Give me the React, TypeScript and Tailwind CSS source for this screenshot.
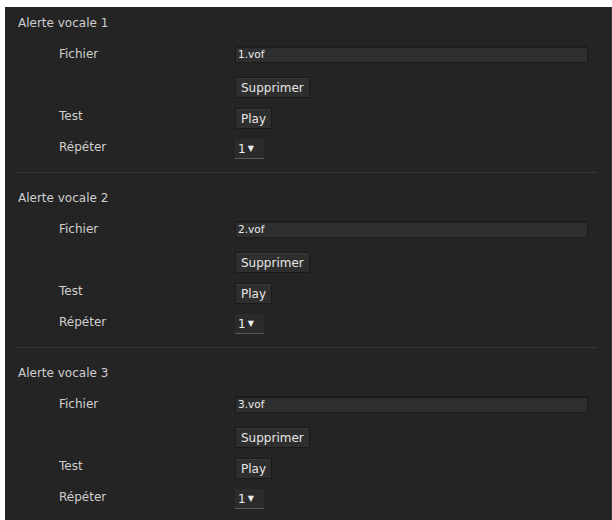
import React from 'react';

interface VoiceAlert {
  id: number;
  file: string;
  repeat: number;
}

const alerts: VoiceAlert[] = [
  { id: 1, file: '1.vof', repeat: 1 },
  { id: 2, file: '2.vof', repeat: 1 },
  { id: 3, file: '3.vof', repeat: 1 },
];

const font = { fontFamily: '"DejaVu Sans", Verdana, sans-serif' };

function SmallButton({ label }: { label: string }) {
  return (
    <button
      type="button"
      className="h-[21px] px-[5px] bg-[#2e2e2e] border border-[#1a1a1a] shadow-[inset_0_1px_0_#3a3a3a] text-[12px] leading-[14px] text-[#e6e6e6]"
    >
      {label}
    </button>
  );
}

function AlertSection({ alert, first }: { alert: VoiceAlert; first: boolean }) {
  return (
    <section className={first ? 'pt-[9px]' : 'pt-[18px] border-t border-[#363636]'}>
      <h3 className="pl-[3px] text-[12px] leading-[14px] text-[#cfcfcf]">Alerte vocale {alert.id}</h3>

      <div className="mt-[16px] grid grid-cols-[176px_1fr] items-start pl-[44px] text-[12px] leading-[14px] text-[#cfcfcf]">
        {/* Fichier */}
        <span className="pt-[1px]">Fichier</span>
        <div className="h-[17px] w-[353px] bg-[#2f2f2f] border border-[#1b1b1b] shadow-[inset_0_1px_1px_#1f1f1f] pl-[2px] text-[10.5px] leading-[15px] text-[#ececec]">
          {alert.file}
        </div>

        <span />
        <div className="mt-[14px]">
          <SmallButton label="Supprimer" />
        </div>

        {/* Test */}
        <span className="mt-[10px] pt-[1px]">Test</span>
        <div className="mt-[10px]">
          <SmallButton label="Play" />
        </div>

        {/* Répéter */}
        <span className="mt-[10px] pt-[1px]">Répéter</span>
        <div className="mt-[10px] mb-[13px]">
          <div className="flex h-[20px] w-[29px] items-center gap-[2px] bg-[#2b2b2b] border-b border-[#5a5a5a] pl-[3px] text-[12px] text-[#ececec]">
            <span>{alert.repeat}</span>
            <span className="text-[8px] leading-none">▼</span>
          </div>
        </div>
      </div>
    </section>
  );
}

export default function App() {
  return (
    <div className="w-[612px] h-[520px] overflow-hidden bg-white pl-[5px] pt-[7px]" style={font}>
      <div className="h-full bg-[#242424] border-r border-[#3a3a3a] pl-[10px] pr-[14px]">
        {alerts.map((alert, i) => (
          <AlertSection key={alert.id} alert={alert} first={i === 0} />
        ))}
      </div>
    </div>
  );
}
